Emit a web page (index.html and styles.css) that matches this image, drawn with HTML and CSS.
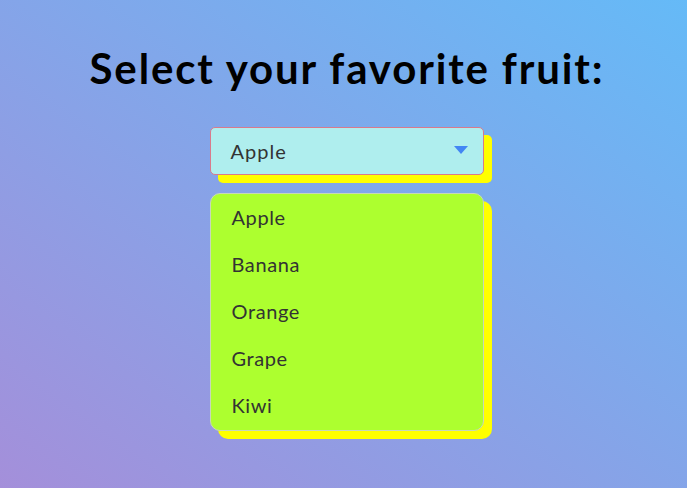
FILE: index.html
```html
<!DOCTYPE html>
<html>
<head>
<meta charset="utf-8">
<link rel="stylesheet" href="styles.css">
</head>
<body>
<main class="page">
  <h1 class="title">Select your favorite fruit:</h1>
  <div class="dropdown">
    <div class="select">
      <span class="select-value">Apple</span>
      <span class="arrow"></span>
    </div>
    <ul class="options">
      <li class="option">Apple</li>
      <li class="option">Banana</li>
      <li class="option">Orange</li>
      <li class="option">Grape</li>
      <li class="option">Kiwi</li>
    </ul>
  </div>
</main>
</body>
</html>
```
FILE: styles.css
```css
html, body {
  margin: 0;
  height: 100%;
}
body {
  background: linear-gradient(to top right, #a48fda, #65baf7);
  font-family: "Gill Sans", "Gill Sans MT", Lato, "Noto Sans", sans-serif;
  color: #333;
}
.page {
  display: flex;
  flex-direction: column;
  align-items: center;
  padding-top: 43px;
}
.title {
  margin: 0 0 0 7px;
  font-size: 42px;
  font-weight: 700;
  color: #000;
  line-height: 50px;
  letter-spacing: 1.85px;
}
.dropdown {
  margin-top: 34px;
  margin-left: 6px;
  width: 274px;
  display: flex;
  flex-direction: column;
  gap: 18px;
}
.select {
  box-sizing: border-box;
  height: 48px;
  background: #afeeee;
  border: 1px solid #d97a8c;
  border-radius: 5px;
  box-shadow: 8px 8px 0 #ffff00;
  display: flex;
  align-items: center;
  justify-content: space-between;
  padding: 0 15px 0 20px;
  font-size: 20px;
  letter-spacing: 1px;
}
.arrow {
  width: 0;
  height: 0;
  border-left: 7px solid transparent;
  border-right: 7px solid transparent;
  border-top: 8px solid #4286f4;
  margin-bottom: 2px;
}
.options {
  list-style: none;
  margin: 0;
  padding: 0;
  background: #adff2f;
  border: 1px solid #c8d8b8;
  border-radius: 10px;
  box-shadow: 8px 8px 0 #ffff00;
  box-sizing: border-box;
  height: 238px;
}
.option {
  padding: 12px 21px;
  font-size: 20px;
  line-height: 23px;
  letter-spacing: 0.6px;
}
```
